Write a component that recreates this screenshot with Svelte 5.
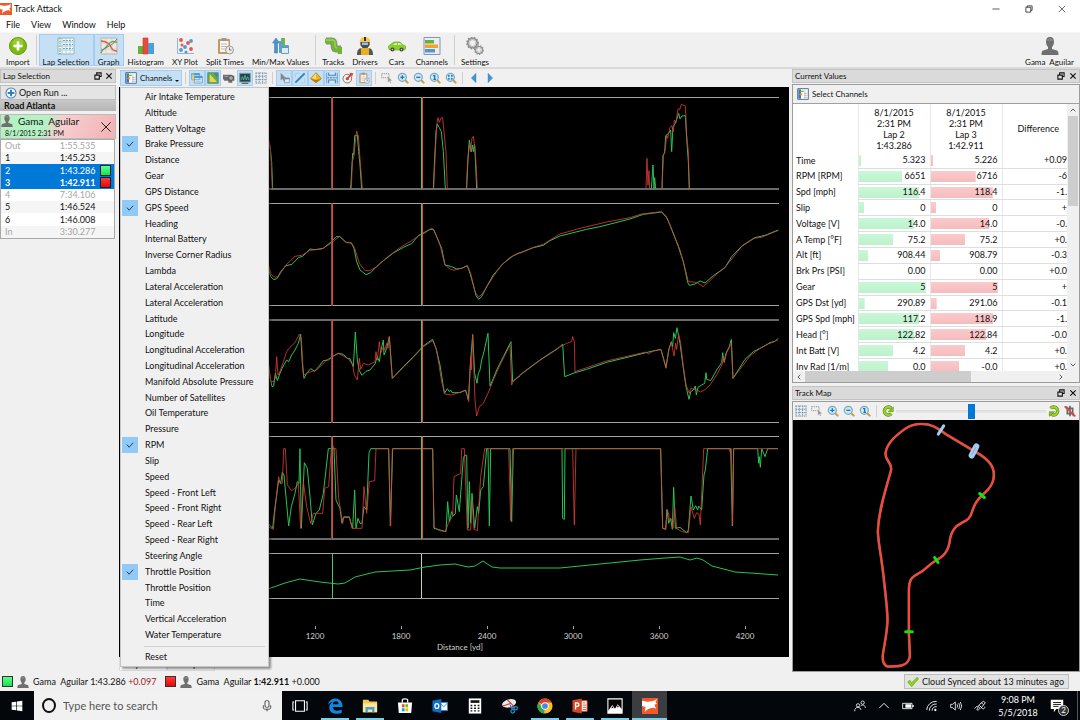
<script>
  const icons = {
    logo: '<path fill="#f0592b" d="M0 0h18v18H0z"/><path fill="#fff" d="M0 3c4 0 5 2 8 1s5 0 9-3l-2 4 2 1-3 2 2 4-3-1c-3 0-7 1-10 5L4 10 0 9z"/>',
    import: '<circle cx="9" cy="9" r="8.500" fill="#7fba12" stroke="#5f9a0a"/><circle cx="9" cy="6.500" r="5.500" fill="#a2d83e" opacity=".6"/><path d="M9 4.500v9M4.500 9h9" stroke="#fff" stroke-width="2.600"/>',
    grid: '<path fill="#f7fbfd" stroke="#8fb4c4" d="M1 1h16v16H1z"/><path stroke="#9ec7d2" d="M1 5h16M1 9h16M1 13h16M5 1v16M9 1v16M13 1v16" stroke-width=".8"/><path stroke="#55a35e" stroke-dasharray="1.500 1" d="M3 1v16"/><path stroke="#6aa7c5" d="M6 3.500h10M6 7.500h10M6 11.500h10" stroke-dasharray="2 1"/>',
    graph: '<path fill="#ece9e4" stroke="#b9b4ac" d="M1 1h16v16H1z"/><path d="M1 6h16M1 12h16M6 1v16M12 1v16" stroke="#cfcac2" stroke-width=".7"/><path fill="none" stroke="#e05a44" stroke-width="1.300" d="M1 4c5 0 9 3 10 6s3 4 6 4"/><path fill="none" stroke="#4fae54" stroke-width="1.300" d="M1 13c5 0 6-6 10-8s4 1 6 0"/><path fill="none" stroke="#777" d="M1 16C5 8 10 12 17 2"/>',
    histogram: '<path fill="#63b535" d="M1 9h5v8H1z"/><path fill="#e64c3c" stroke="#c23a2c" stroke-width=".6" d="M6 1h5v16H6z"/><path fill="#4d9fd8" d="M11 6h6v11h-6z"/>',
    xy: '<path d="M1.500 1v15.500H18M4 16v1M8 16v1M12 16v1" stroke="#9cb3c4" fill="none"/><g fill="#e5554a"><circle cx="5" cy="3" r="1.900"/><circle cx="12" cy="6" r="1.900"/><circle cx="15" cy="12" r="1.900"/><circle cx="6" cy="8" r="1.500"/></g><g fill="#4c9bd4"><circle cx="15" cy="4" r="1.900"/><circle cx="9" cy="10" r="1.900"/><circle cx="5" cy="13" r="1.900"/><circle cx="10" cy="15" r="1.500"/></g>',
    clip: '<rect x="2" y="2" width="12" height="15" rx="1" fill="#c09a66"/><path fill="#f7f6f1" d="M4 4h8.500v11H4z"/><path fill="#999" d="M5.500 1h5v3h-5z"/><path stroke="#bbb" d="M5 7h6M5 9.500h6M5 12h4"/><circle cx="13.500" cy="13" r="4" fill="#eceae5" stroke="#9b9b9b"/><path d="M13.500 10.500V13h2" stroke="#777" fill="none"/>',
    minmax: '<path fill="#4d93c9" stroke="#3477aa" stroke-width=".5" d="M4 1l3.500 5H5.500v10h-3V6H.5z"/><path fill="#6bb648" d="M9 1h4v8H9z"/><path fill="#5b9fcf" d="M7 4h3v12H7z"/><path fill="#d9ecf7" stroke="#6c9fbf" d="M9.500 8.500h7v8h-7z"/><path fill="#5a9cc8" d="M10 9h6v2h-6z"/>',
    track: '<path fill="none" stroke="#8e8e8e" stroke-width="7" d="M2 4h6c4 0 0 8 4 8h5"/><path fill="none" stroke="#6eb82c" stroke-width="4.500" d="M1 4h8c3 0-1 8 3 8h4v5"/><path fill="none" stroke="#b1e06b" stroke-width="1" d="M2 3h7c4 0 0 8 4 8"/>',
    driver: '<path fill="#555" d="M1 18c0-4 1-7 5-7h6c4 0 5 3 5 7z"/><path fill="#e7ad25" d="M5 18v-7h8v7z"/><path fill="#f2c94c" d="M5 10c-3-7 0-10 4-10s7 3 4 10z"/><path fill="#464b55" d="M4.500 5h9v3l-2 3h-5l-2-3z"/><path fill="#8ec3e6" d="M6 5.500h6V8H6z"/><path fill="#333" d="M8 0h2v4H8z"/>',
    car: '<path fill="#8fce2f" stroke="#62a315" stroke-width=".6" d="M.5 11V9l2-1.500L6 5h6l3 3 2.500 1v3l-1 1h-15z"/><path fill="#d9edb0" d="M5 8l2-2h2v2zM10 8V6h2l1.500 2z"/><circle cx="4.500" cy="12.500" r="2" fill="#444"/><circle cx="13.500" cy="12.500" r="2" fill="#444"/><circle cx="4.500" cy="12.500" r=".8" fill="#ccc"/><circle cx="13.500" cy="12.500" r=".8" fill="#ccc"/>',
    channels: '<path fill="#e9eef5" stroke="#8096b4" d="M1 .5h16v17H1z"/><path fill="#67b03e" d="M2 3h9v3.500H2z"/><path fill="#f3a32c" d="M2 7.500h13V11H2z"/><path fill="#4c9ad4" d="M2 12h10v3.500H2z"/>',
    gears: '<g fill="none" stroke="#8f8f8f"><circle cx="6.500" cy="6" r="4.200" stroke-width="2.600"/><circle cx="6.500" cy="6" r="5.600" stroke-width="1.600" stroke-dasharray="1.700 1.300"/><circle cx="13" cy="13" r="3" stroke-width="2"/><circle cx="13" cy="13" r="4.300" stroke-width="1.300" stroke-dasharray="1.400 1.200"/></g><g fill="none" stroke="#d8d8d8"><circle cx="6.500" cy="6" r="3.600"/><circle cx="13" cy="13" r="2.600"/></g>',
    user: '<path fill="#6f6f6f" d="M9 0c3 0 4 2 4 5 0 2-1 4-2 5v2l5 1.500c1 .5 1.500 2 1.500 4.500H.5C.5 15.500 1 14 2 13.500L7 12v-2C6 9 5 7 5 5c0-3 1-5 4-5z"/><path fill="#919191" opacity=".6" d="M9 1c2 0 3 1 3 3H6c0-2 1-3 3-3z"/>',
    plus: '<circle cx="9" cy="9" r="7.500" fill="#fff" stroke="#3f83bf" stroke-width="1.600"/><path d="M9 4v10M4 9h10" stroke="#2f7fc4" stroke-width="3"/>',
    chan: '<path fill="#fff" stroke="#54708f" stroke-width="1.500" d="M1 1h16v16H1z"/><path fill="#3f74b5" d="M2 2h4v14H2z"/><path fill="#67b03e" d="M4 4h6v2H4z"/><path fill="#f3952c" d="M4 8h4v3H4z"/><path stroke="#aab" d="M10 8h6M10 11h6M10 14h6M12 3v13"/>',
    layers: '<path fill="#d9ecf9" stroke="#4a8ec2" d="M1 2.500h12v9H1zM5 6.500h12v10H5z"/><path fill="#4a9bd5" d="M1 2h12v3H1zM5 6h12v3H5z"/><path fill="#f0c34a" d="M2 2h2v12H2z"/><path stroke="#8bb" d="M7 11h8M7 14h8"/>',
    shape: '<path fill="#63ad4b" stroke="#487f86" d="M1 1h16v16H1z"/><path fill="#f4d34c" d="M4 3l11 12H4z"/><path fill="#3c86bd" d="M10 2h6v8z"/>',
    camera: '<path fill="#6b6b6b" d="M0 4h12l5 2v7h-3v3H8v-3H2l-2-3z"/><circle cx="12" cy="9" r="3.500" fill="#aaa" stroke="#444"/><path stroke="#bbb" d="M2 6.500h6"/>',
    scope: '<path fill="#24424c" stroke="#7e9aa5" stroke-width="1.500" d="M1 2h16v13H1z"/><path fill="none" stroke="#65d6ad" d="M3 12l2-5 2 5 2-7 2 7 2-5 2 5"/><path d="M4 17h10" stroke="#666" stroke-width="2"/>',
    dots: '<path d="M1 1.500h16M1 6.500h16M1 11.500h16M1 16.500h16M1.500 1v16M6.500 1v16M11.500 1v16M16.500 1v16" stroke="#53799a" stroke-width="1.100" stroke-dasharray="2 1"/>',
    pointer: '<path fill="#888" d="M4 1l8 8-3 .5 2 4-2 1-2-4-3 2z"/><path fill="#e8edf2" stroke="#6c8498" d="M10 9h7v7h-7z"/><path fill="#6a89a4" d="M10 9h7v2h-7z"/>',
    line: '<path stroke="#9dc6e4" d="M2 8V2h6M16 10v6h-6" fill="none"/><path stroke="#2f84c4" stroke-width="3" d="M2 16L16 2"/>',
    gold: '<path fill="#f1b321" stroke="#9a6c09" d="M9 1l8 9-8 6-8-6z"/><path fill="#b9790b" d="M1 10l8 2v4zM17 10l-8 2v4z"/><path fill="#ffdf72" d="M9 2v9L3 9z"/>',
    stack: '<path stroke="#3c7fb8" stroke-width="1.600" fill="#d7ebf8" d="M4 1v4h10V1M4 17v-5h10v5"/><path d="M2 8.500h14" stroke="#3c7fb8" stroke-width="1.600" stroke-dasharray="3 1"/><path stroke="#3c7fb8" d="M1 1v16M17 1v16"/>',
    gauge: '<circle cx="8" cy="10" r="6.500" fill="#f5f5f5" stroke="#777" stroke-width="1.500"/><path d="M8 10L14 3" stroke="#db3a2f" stroke-width="2.500"/><circle cx="8" cy="10" r="2.500" fill="#d7463b"/><path fill="#d7463b" d="M11 1l6 1-2 5z"/>',
    select: '<path fill="none" stroke="#777" stroke-dasharray="2 1" d="M1 2.500h11v6H1z"/><path fill="#999" stroke="#fff" stroke-width=".5" d="M10 6l7 7-3 .3 1.500 3-1.600.7-1.500-3-2.400 2z"/>',
    zin: '<path stroke="#d9973a" stroke-width="3" stroke-linecap="round" d="M12 12l4 4"/><circle cx="8" cy="8" r="6" fill="#c9e8fa" stroke="#7fa7bf" stroke-width="1.800"/><path stroke="#1f78b8" stroke-width="2" d="M8 5v6M5 8h6"/>',
    zout: '<path stroke="#d9973a" stroke-width="3" stroke-linecap="round" d="M12 12l4 4"/><circle cx="8" cy="8" r="6" fill="#c9e8fa" stroke="#7fa7bf" stroke-width="1.800"/><path stroke="#1f78b8" stroke-width="2" d="M5 8h6"/>',
    zone: '<path stroke="#d9973a" stroke-width="3" stroke-linecap="round" d="M12 12l4 4"/><circle cx="8" cy="8" r="6" fill="#c9e8fa" stroke="#7fa7bf" stroke-width="1.800"/><path stroke="#1f78b8" stroke-width="2" fill="none" d="M6 5.500h2.500V11M6.500 11h4"/>',
    zfit: '<path stroke="#d9973a" stroke-width="3" stroke-linecap="round" d="M12 12l4 4"/><circle cx="8" cy="8" r="6" fill="#c9e8fa" stroke="#7fa7bf" stroke-width="1.800"/><path stroke="#1f78b8" stroke-width="2" d="M5 5.500h2M9 5.500h2M5 10.500h2M9 10.500h2M5.500 5v2M10.500 5v2M5.500 9v2M10.500 9v2"/>',
    left: '<path fill="#3f96d8" stroke="#2473b0" stroke-width=".5" d="M12 2v14L5 9z"/>',
    right: '<path fill="#3f96d8" stroke="#2473b0" stroke-width=".5" d="M6 2v14l7-7z"/>',
    ccw: '<path fill="none" stroke="#4f7d0a" stroke-width="5" d="M14 5a6 6 0 1 0 0 8"/><path fill="none" stroke="#9bd02a" stroke-width="3.400" d="M14 5a6 6 0 1 0 0 8"/><path fill="#8cc31f" stroke="#4f7d0a" stroke-width=".7" d="M17 3v7H9z"/>',
    cw: '<path fill="none" stroke="#4f7d0a" stroke-width="5" d="M4 5a6 6 0 1 1 0 8"/><path fill="none" stroke="#9bd02a" stroke-width="3.400" d="M4 5a6 6 0 1 1 0 8"/><path fill="#8cc31f" stroke="#4f7d0a" stroke-width=".7" d="M2 17v-7h8z"/>',
    mute: '<path fill="none" stroke="#666" stroke-width="2.500" d="M5 5h8v8H5zM9 1v16M4 2v4M14 12v5"/><path stroke="#e0483b" stroke-width="2.500" d="M1 2l16 15"/>',
    tick: '<path fill="#8ed11f" stroke="#5d9a0d" stroke-width=".8" d="M1 9l3-3 3 4 8-8 2.500 2L7 16z"/>',
    win: '<path fill="#fff" d="M1 3.500l7-1V8.500H1zM9 2.300L17 1v7.500H9zM1 9.500h7v6l-7-1zM9 9.500h8V17l-8-1.300z"/>',
    mic: '<rect x="6" y="1" width="6" height="10" rx="2" fill="none" stroke="#333" stroke-width="1.300"/><path fill="none" stroke="#333" stroke-width="1.300" d="M3.500 8v3.500c0 2 2 2.500 5.500 2.500s5.500-.5 5.500-2.500V8M9 14v3"/>',
    taskview: '<path fill="none" stroke="#fff" stroke-width="1.200" d="M4 3h10v12H4zM2.500 4.500H1v9h1.500M15.500 4.500H17v9h-1.500"/>',
    edge: '<path fill="#1285e0" d="M1 8C2 3 5 .5 9.500.5 15 .5 17.500 4.500 17.500 10H6.500c.2 3 2.500 4.300 5 4.300 2 0 3.500-.5 5-1.300v3.500c-1.500.8-3.500 1.200-6 1.200-5 0-8-3-8-7 0-3 1.500-5 4-6.200C4 4.500 2 6 1 8zm5.500-1H13c0-2-1-3.300-3-3.300S6.800 5 6.500 7z"/>',
    folder: '<path fill="#f4c64c" d="M1 2h6l1.500 2H17v12H1z"/><path fill="#ffe596" d="M1 6h16v10H1z"/><path fill="#3fa0dc" d="M4 10h10v6h-2.500v-3h-5v3H4z"/>',
    store: '<path fill="none" stroke="#fff" stroke-width="1.400" d="M6 5V2c0-1.500 6-1.500 6 0v3"/><path fill="#fff" d="M1 5h16l-1 12H2z"/><path fill="#f25022" d="M5.500 7h3v3.500h-3z"/><path fill="#7fba00" d="M9.500 7h3v3.500h-3z"/><path fill="#00a4ef" d="M5.500 11.500h3V15h-3z"/><path fill="#ffb900" d="M9.500 11.500h3V15h-3z"/>',
    outlook: '<path fill="#fff" stroke="#2b88d8" d="M8 5h9.500v9H8z"/><path fill="none" stroke="#2b88d8" d="M9 6l4 4 4-4"/><path fill="#0f6fc5" d="M.5 3l10-2v16l-10-2z"/><ellipse cx="5.500" cy="9" rx="2.200" ry="2.800" fill="none" stroke="#fff" stroke-width="1.400"/>',
    calc: '<path fill="#fff" d="M2 .5h14v17H2z"/><path fill="#111" d="M4 2.500h10v3H4z"/><path stroke="#111" stroke-width="1.600" stroke-dasharray="2 2" d="M4 8.500h11M4 11.500h11M4 14.500h11"/>',
    snip: '<ellipse cx="8" cy="6" rx="8" ry="4.500" fill="#e9e9ea" transform="rotate(-15 8 6)"/><path stroke="#d94242" stroke-width="1.400" d="M1 9l9-3M6 2l8 8"/><g fill="none" stroke="#2c86c9" stroke-width="1.400"><circle cx="12" cy="15" r="2"/><circle cx="15.500" cy="11.500" r="1.900"/><path d="M9 8l3 5M9 10l5 1"/></g>',
    chrome: '<circle cx="9" cy="9" r="8.500" fill="#fbc116"/><path fill="#e33b2e" d="M9 9L1.600 4.800A8.500 8.500 0 0 1 16.500 5H9z"/><path fill="#2da94f" d="M9 9l-1 8.500A8.500 8.500 0 0 1 1.600 4.800L6 11z"/><circle cx="9" cy="9" r="4.200" fill="#fff"/><circle cx="9" cy="9" r="3.200" fill="#4285f4"/>',
    ppt: '<path fill="#fff" stroke="#d24726" d="M9 3h8v12H9z"/><path stroke="#d24726" d="M12 8h4M12 10.500h4M12 13h4M12 5.500h3"/><path fill="#d24726" d="M.5 2.500L11 .5v17L.5 15.500z"/><path fill="none" stroke="#fff" stroke-width="1.500" d="M4 13V5.500h1.500c3 0 3 4 0 4H4"/>',
    photos: '<path fill="#050505" stroke="#fff" stroke-width="1.200" d="M1 1h16v16H1z"/><path fill="#fff" d="M1 15l5-7 3 4 3-5 5 6v4H1z"/><path fill="#050505" d="M6 9l1.500 2.500-2-.5-1 1zM12 8l1.500 2.500-1.500-.5-1 1z"/>',
    people: '<g fill="none" stroke="#fff" stroke-width="1.200"><circle cx="6" cy="8" r="2.500"/><circle cx="13" cy="4" r="2.500"/><path d="M1 17c0-4 2-6 5-6s4 2 4.500 4M10 9c3-3 7-1 7 3"/></g>',
    chevron: '<path fill="none" stroke="#fff" stroke-width="1.400" d="M2 12l7-7 7 7"/>',
    arrow: '<path fill="none" stroke="#444" stroke-width="2.600" d="M2 13l7-7 7 7"/>',
    battery: '<path fill="none" stroke="#fff" stroke-width="1.300" d="M1 5h14v8H1z"/><path fill="#fff" d="M5 6.500h8.500v5H5zM15.500 7.500h2v3h-2z"/>',
    wifi: '<g fill="none" stroke="#fff" stroke-width="1.300"><path d="M1 15A14 14 0 0 1 16 2M5 16A10 10 0 0 1 16 6M9 16a6 6 0 0 1 7-6"/></g><circle cx="14" cy="15" r="1.700" fill="#fff"/>',
    sound: '<path fill="none" stroke="#fff" stroke-width="1.200" d="M1 6.500h3L8 3v12l-4-3.500H1zM10.500 6.500q2 2.500 0 5M13 4.500q3.500 4.500 0 9M15.500 3q4 6 0 12"/>',
    pen: '<path fill="none" stroke="#fff" stroke-width="1.300" d="M1 13c4-6 6-3 4 0s2 3 3 0c1-2-3-3 0-6l6-5 3 2-7 9M8 8l4 4c2 3 5 0 4-2M11 4l3 3"/>',
    note: '<path fill="#fff" d="M1 1h16v12h-9l-3 4v-4H1z"/><path stroke="#111" stroke-width="1.200" d="M4 4.500h10M4 7h10M4 9.500h7"/>',
    float: '<path fill="none" stroke="#111" stroke-width="2.400" d="M6 6V2h10v8h-4M2 7h10v9H2z"/>',
    close: '<path stroke="#111" stroke-width="2.600" d="M3 3l12 12M15 3L3 15"/>',
    thinx: '<path stroke="#222" stroke-width="1.500" d="M2 2l14 14M16 2L2 16"/>',
    min: '<path stroke="#333" stroke-width="1.800" d="M1 9h16"/>',
    restore: '<path fill="none" stroke="#222" stroke-width="1.800" d="M5 5V2h11v10h-3M2 5h11v11H2z"/>',
    check: '<path fill="none" stroke="#1d2f45" stroke-width="2" d="M2 8l5 6 9-10"/>'
  };

  const menus = ['File', 'View', 'Window', 'Help'];
  const tools = [
    { t: 'Import', i: 'import' }, null,
    { t: 'Lap Selection', i: 'grid', on: true }, { t: 'Graph', i: 'graph', on: true },
    { t: 'Histogram', i: 'histogram' }, { t: 'XY Plot', i: 'xy' }, { t: 'Split Times', i: 'clip' },
    { t: 'Min/Max Values', i: 'minmax' }, null,
    { t: 'Tracks', i: 'track' }, { t: 'Drivers', i: 'driver' }, { t: 'Cars', i: 'car' },
    { t: 'Channels', i: 'channels' }, null, { t: 'Settings', i: 'gears' }
  ];
  const graphTools = [
    ['layers', 1], ['shape', 1], ['camera', 0], ['scope', 1], ['dots', 0], null,
    ['pointer', 1], ['line', 1], ['gold', 1], ['stack', 1], ['gauge', 0], ['clip', 1], null,
    ['select', 0], ['zin', 0], ['zout', 0], ['zone', 0], ['zfit', 0], null,
    ['left', 0], ['right', 0]
  ];
  const laps = [
    ['Out', '1:55.535', 'dim'], ['1', '1:45.253', ''], ['2', '1:43.286', 'sel green'],
    ['3', '1:42.911', 'sel red best'], ['4', '7:34.106', 'dim'], ['5', '1:46.524', ''],
    ['6', '1:46.008', ''], ['In', '3:30.277', 'dim']
  ];
  const channels = ['Air Intake Temperature', 'Altitude', 'Battery Voltage', 'Brake Pressure', 'Distance',
    'Gear', 'GPS Distance', 'GPS Speed', 'Heading', 'Internal Battery', 'Inverse Corner Radius', 'Lambda',
    'Lateral Acceleration', 'Lateral Acceleration', 'Latitude', 'Longitude', 'Longitudinal Acceleration',
    'Longitudinal Acceleration', 'Manifold Absolute Pressure', 'Number of Satellites', 'Oil Temperature',
    'Pressure', 'RPM', 'Slip', 'Speed', 'Speed - Front Left', 'Speed - Front Right', 'Speed - Rear Left',
    'Speed - Rear Right', 'Steering Angle', 'Throttle Position', 'Throttle Position', 'Time',
    'Vertical Acceleration', 'Water Temperature'];
  const checked = [3, 7, 22, 30];
  const values = [
    ['Time', '5.323', 3, '5.226', 3, '+0.09'], ['RPM [RPM]', '6651', 61, '6716', 63, '-6'],
    ['Spd [mph]', '116.4', 85, '118.4', 87, '-1.'], ['Slip', '0', 7, '0', 7, '+'],
    ['Voltage [V]', '14.0', 78, '14.0', 82, '-0.'], ['A Temp [°F]', '75.2', 48, '75.2', 48, '+0.'],
    ['Alt [ft]', '908.44', 13, '908.79', 13, '-0.3'], ['Brk Prs [PSI]', '0.00', 0, '0.00', 0, '+0.0'],
    ['Gear', '5', 94, '5', 94, '+'], ['GPS Dst [yd]', '290.89', 8, '291.06', 8, '-0.1'],
    ['GPS Spd [mph]', '117.2', 85, '118.9', 88, '-1.'], ['Head [°]', '122.82', 78, '122.84', 78, '-0.0'],
    ['Int Batt [V]', '4.2', 48, '4.2', 48, '+0.'], ['Inv Rad [1/m]', '0.0', 41, '-0.0', 40, '+0.']
  ];

  // Each block: plot origin, then the polylines of lap 2 (green) and lap 3 (red) at a third of a pixel per unit.
  const traces = [
    { x: 260, y: 85,
      g: ['24,175 30,185 35,230 38,311', '272,311 276,240 278,205 281,210 284,152 292,150 296,200 300,240 305,311',
        '520,311 524,220 528,140 532,118 538,128 544,140 550,200 556,311', '620,311 624,220 628,165 634,200 638,180 640,200 644,178 650,311',
        '24,545 32,575 42,584 52,580 62,560 78,542 96,538 115,518 128,514 150,492 165,494 190,490 214,470 228,455 240,455 258,472 274,474 282,490 290,530 300,555 318,569 332,563 360,535 400,504 430,487 455,476 475,452 495,443 510,433 520,433 530,455 545,490 555,540 575,545 590,552 605,550 622,542 630,565 640,600 648,632 656,643 665,635 680,605 700,570 730,535 760,512 780,503'],
      r: ['24,155 31,185 37,311', '274,311 277,230 282,212 287,160 290,138 295,152 300,220 307,311',
        '521,311 526,200 530,120 534,98 538,112 544,98 548,98 552,140 558,200 562,311', '619,311 623,230 628,180 632,200 636,160 640,154 646,200 652,311',
        '24,535 34,570 46,577 56,573 78,540 105,514 125,511 150,496 185,492 215,474 238,454 258,472 274,473 284,490 298,535 315,557 330,557 350,545 380,518 420,488 455,467 490,443 515,430 522,435 540,480 555,540 570,552 582,556 610,548 622,542 632,565 645,620 655,636 666,628 690,590 720,545 750,517 780,503'] },
    { x: 520, y: 85,
      g: ['394,311 399,240 402,311 404,278 407,311', '426,311 429,210 434,205 437,152 446,145 452,135 455,200 459,125 466,115 476,85 480,102 486,93 496,92 500,160 505,230 508,311',
        '0,504 40,488 70,481 90,467 120,453 200,433 240,425 330,402 370,388 425,381 440,398 450,420 475,485 490,530 503,592 508,601 525,597 540,588 555,594 580,572 615,548 635,515 665,484 705,458 735,451 775,435'],
      r: ['378,311 381,220 384,300 387,257 389,311', '426,311 430,215 436,190 440,150 443,160 450,128 455,122 460,140 463,105 468,112 474,72 480,72 484,58 496,63 500,150 505,200 508,311',
        '0,504 40,487 70,478 92,464 120,447 180,430 260,411 330,398 365,387 425,380 440,396 460,445 480,495 495,550 505,590 530,592 549,605 565,592 590,567 615,547 645,510 668,481 700,460 725,457 775,436'] },
    { x: 260, y: 310,
      g: ['24,155 30,200 36,230 41,228 46,190 52,212 58,195 66,175 80,150 86,155 95,135 105,120 115,100 122,73 127,160 132,205 140,190 152,176 164,184 178,168 190,152 205,150 220,138 235,130 250,133 262,145 270,146 280,170 286,66 292,150 298,182 306,196 318,184 330,180 345,162 352,140 358,155 362,125 370,90 372,135 380,115 388,80 397,205 430,170 460,140 490,108 505,97 518,88 528,115 540,165 553,250 562,236 568,245 572,240 576,248 600,248 617,240 625,270 632,150 638,75 644,190 651,220 655,190 660,180 665,150 672,125 684,70 690,228 700,205 710,180 730,140 753,95 758,215 770,205 780,198',
        '24,640 38,655 44,600 56,510 62,520 67,487 72,495 86,648 94,590 105,550 112,515 117,520 120,416 124,655 133,458 142,475 150,560 157,645 168,610 178,600 190,550 205,416 222,416 228,570 240,595 246,640 250,622 268,622 278,655 284,540 288,655 294,625 300,640 306,640 312,590 320,600 327,430 332,416 386,416 391,648 398,416 518,416 522,655 558,665 563,575 568,635 575,605 580,618 586,610 589,555 598,605 610,445 614,436 620,436 624,655 628,515 632,640 636,550 644,655 652,590 656,610 662,540 670,530 680,416 684,416 688,648 692,416 750,416 755,635 760,416 780,416'],
      r: ['24,150 32,213 40,216 46,205 50,140 54,195 60,185 70,155 80,125 90,112 105,98 118,73 124,85 130,195 145,188 170,180 200,150 235,130 265,146 278,165 283,195 292,210 298,145 302,178 310,160 325,165 345,155 348,125 352,150 358,95 362,130 370,110 374,120 380,100 384,115 388,80 397,205 430,172 460,142 490,110 518,92 530,120 545,215 555,252 575,255 590,250 615,242 622,255 626,275 632,140 634,180 638,72 645,270 650,318 658,290 670,280 684,250 700,210 720,165 750,105 755,225 760,212 780,195',
        '24,650 40,658 46,590 56,500 60,520 67,520 71,416 76,416 82,525 95,542 105,535 115,520 122,655 130,515 140,590 152,640 160,610 188,610 194,535 206,530 214,416 218,405 222,416 228,416 236,565 248,640 252,620 268,620 276,655 306,655 312,530 320,610 328,515 344,512 348,416 386,416 392,648 397,416 518,416 522,652 540,662 556,665 565,640 578,618 582,500 602,490 605,416 613,416 622,660 632,660 636,570 642,658 652,662 662,500 674,416 746,416 752,632 758,416 780,416'] },
    { x: 520, y: 310,
      g: ['0,195 30,172 60,150 90,130 118,112 128,102 134,200 165,188 200,178 260,157 330,140 390,125 423,118 438,172 446,120 454,95 458,110 461,68 466,85 471,53 480,100 488,160 498,230 507,268 512,245 520,240 526,228 529,255 534,232 545,225 554,220 558,188 560,208 572,212 590,180 605,158 608,128 612,155 618,130 628,110 634,88 639,205 655,180 675,148 700,125 730,110 750,98 765,94 774,85',
        '0,416 126,416 128,625 133,628 135,416 422,416 428,655 437,658 441,598 446,640 452,625 457,658 461,532 466,655 480,652 500,668 505,660 513,558 520,600 527,587 533,600 536,588 545,600 552,495 556,480 563,416 632,416 637,648 641,416 713,416 716,460 718,440 721,472 725,416 735,440 743,416 774,416'],
      r: ['0,196 60,151 100,125 118,112 140,100 155,95 158,80 163,95 165,185 200,173 260,153 330,137 378,126 385,132 400,123 423,119 438,175 448,112 454,98 462,138 467,100 470,118 476,73 482,100 490,170 498,225 508,250 512,235 530,240 542,246 556,238 570,225 590,195 608,160 610,140 613,158 620,128 634,100 639,205 660,178 690,138 720,115 745,102 774,90',
        '0,416 158,416 163,645 168,416 422,416 428,655 437,658 442,600 446,612 448,630 455,628 459,655 464,590 470,655 485,665 505,668 513,590 523,625 530,608 537,612 541,645 551,416 626,416 630,425 634,416 638,645 641,416 774,416'] }
  ];
  const thinRules = [97.5, 203.5, 305.5, 422.5, 436.5, 553.5, 598.5];
  const thickRules = [189, 320, 539];
  const bands = [[97, 189], [203, 306], [320, 423], [436, 539]];
  const ticks = [['1200', 315], ['1800', 401], ['2400', 487], ['3000', 573], ['3600', 659], ['4200', 745]];
  const apps = [
    ['taskview', ''], ['edge', 'run'], ['folder', 'run'], ['store', ''], ['outlook', ''], ['calc', ''],
    ['snip', ''], ['chrome', 'run'], ['ppt', 'run'], ['photos', 'run'], ['logo', 'run active']
  ];
  const tray = ['people', 'chevron', 'battery', 'wifi', 'sound', 'pen'];
  const trackPath = 'M425 43C460 43 475 58 500 75L582 124C620 145 642 165 642 195C642 225 625 240 606 258C590 272 583 285 577 305C570 330 560 332 545 340C525 350 515 365 511 385C508 410 503 435 469 452C445 465 440 480 415 492C395 502 387 510 387 545V670L390 735C390 760 370 770 345 770L328 771C312 771 307 755 309 735C314 700 322 670 323 630C322 590 316 550 311 500C303 430 295 400 294 365C296 300 318 240 334 180C335 155 315 155 317 130C322 100 345 80 375 58C390 47 405 43 425 43Z';
  let position = $state(50);
</script>

{#snippet icon(name, size)}
  <svg class="icon {size}" viewBox="0 0 18 18" fill="none" aria-hidden="true">{@html icons[name]}</svg>
{/snippet}

{#snippet dockTitle(text)}
  <header class="dock-title">
    <h2>{text}</h2>
    <button aria-label="Float {text}">{@render icon('float', 'xs')}</button>
    <button aria-label="Close {text}">{@render icon('close', 'xs')}</button>
  </header>
{/snippet}

<div class="app">
  <header class="titlebar">
    {@render icon('logo', 's')}
    <h1>Track Attack</h1>
    <button aria-label="Minimize">{@render icon('min', 'xs')}</button>
    <button aria-label="Restore">{@render icon('restore', 'xs')}</button>
    <button aria-label="Close">{@render icon('thinx', 'xs')}</button>
  </header>

  <nav class="menubar">
    {#each menus as m}<button>{m}</button>{/each}
  </nav>

  <div class="toolbar">
    {#each tools as tool}
      {#if tool}
        <button class="tool" class:on={tool.on}>{@render icon(tool.i, 'l')}<span>{tool.t}</span></button>
      {:else}
        <i class="sep"></i>
      {/if}
    {/each}
    <button class="tool account">{@render icon('user', 'l')}<span>Gama  Aguilar</span></button>
  </div>

  <main>
    <section class="laps">
      {@render dockTitle('Lap Selection')}
      <button class="open-run">{@render icon('plus', 's')}Open Run ...</button>
      <h3>Road Atlanta</h3>
      <div class="run">
        {@render icon('user', 's')}
        <div class="run-text"><b>Gama  Aguilar</b><span>8/1/2015 2:31 PM</span></div>
        <button aria-label="Close run">{@render icon('thinx', 's')}</button>
      </div>
      <table class="lap-table">
        <tbody>
          {#each laps as [name, time, cls]}
            <tr class={cls}><td>{name}</td><td class="num">{time}</td><td class="mark"><i></i></td></tr>
          {/each}
        </tbody>
      </table>
    </section>

    <section class="graph">
      <div class="graph-bar">
        <button class="drop on">{@render icon('chan', 's')}Channels<i></i></button>
        <i class="sep"></i>
        {#each graphTools as tool}
          {#if tool}
            <button class="mini" class:on={tool[1]} aria-label={tool[0]}>{@render icon(tool[0], 's')}</button>
          {:else}
            <i class="sep"></i>
          {/if}
        {/each}
      </div>
      <div class="plot">
        <svg viewBox="119 87 671 570" preserveAspectRatio="xMinYMin slice" aria-label="Channel graphs">
          {#each thinRules as y}<path class="thin" d="M120 {y}H779" />{/each}
          {#each thickRules as y}<path class="thick" d="M120 {y}H779" />{/each}
          {#each traces as t}
            <g transform="translate({t.x} {t.y}) scale(.33333)">
              {#each t.g as p}<polyline class="green" points={p} />{/each}
              {#each t.r as p}<polyline class="red" points={p} />{/each}
            </g>
          {/each}
          {#each bands as [a, b]}
            <path class="cur-g dim" d="M331.500 {a}V{b}" /><path class="cur-r" d="M332.500 {a}V{b}" />
            <path class="cur-g" d="M421.500 {a}V{b}" /><path class="cur-r" d="M422.500 {a}V{b}" />
          {/each}
          <path class="cur-g" d="M332.500 554V598" /><path class="cur-w" d="M421.500 554V598" />
          <polyline class="green" points="268,589 285,583 300,579 320,582 338,584 345,583 355,577 375,572 410,570 425,567 440,565 455,564 468,567 475,566 483,561 492,567 500,568 560,568 600,564 640,560 665,558 680,557 690,560 697,558 703,560 712,566 735,572 750,573 778,575" />
          {#each ticks as [label, x]}
            <path class="thin" d="M{x + 0.5} 626v3" />
            <text {x} y="639">{label}</text>
          {/each}
          <text x="460" y="650">Distance [yd]</text>
        </svg>
        <div class="menu" role="menu">
          <div class="items">
            {#each channels as c, n}
              <button role="menuitemcheckbox" aria-checked={checked.includes(n)}>
                <i class:ticked={checked.includes(n)}>{#if checked.includes(n)}{@render icon('check', 'xs')}{/if}</i>{c}
              </button>
            {/each}
          </div>
          <hr />
          <button class="reset" role="menuitem"><i></i>Reset</button>
        </div>
      </div>
      <div class="tabs"><button class="on">Layout 0</button><button>Graph</button></div>
    </section>

    <aside>
      <section class="values">
        {@render dockTitle('Current Values')}
        <div class="frame">
          <button class="select">{@render icon('chan', 's')}Select Channels</button>
          <div class="view">
            <div class="scroller">
              <table class="value-table">
                <thead>
                  <tr>
                    <th></th>
                    <th>8/1/2015<br />2:31 PM<br />Lap 2<br />1:43.286</th>
                    <th>8/1/2015<br />2:31 PM<br />Lap 3<br />1:42.911</th>
                    <th>Difference</th>
                  </tr>
                </thead>
                <tbody>
                  {#each values as [name, a, aw, b, bw, d]}
                    <tr>
                      <td>{name}</td>
                      <td class="bar g" style="--w: {aw}%">{a}</td>
                      <td class="bar r" style="--w: {bw}%">{b}</td>
                      <td class="diff">{d}</td>
                    </tr>
                  {/each}
                </tbody>
              </table>
            </div>
            <div class="vscroll">{@render icon('arrow', 'arrow')}<i></i>{@render icon('arrow', 'arrow down')}</div>
          </div>
          <div class="hscroll">{@render icon('arrow', 'arrow back')}<i></i>{@render icon('arrow', 'arrow fore')}</div>
        </div>
      </section>

      <section class="map">
        {@render dockTitle('Track Map')}
        <div class="frame">
          <div class="map-bar">
            {#each ['dots', 'select', 'zin', 'zout', 'zone'] as name}
              <button class="mini" aria-label={name}>{@render icon(name, 's')}</button>
            {/each}
            <i class="sep"></i>
            <button class="mini" aria-label="Rotate left">{@render icon('ccw', 's')}</button>
            <input type="range" min="0" max="100" bind:value={position} aria-label="Rotation" />
            <button class="mini" aria-label="Rotate right">{@render icon('cw', 's')}</button>
            <button class="mini" aria-label="Reset rotation">{@render icon('mute', 's')}</button>
          </div>
          <svg class="track" viewBox="793 421 286 250" aria-label="Track map">
            <g transform="translate(780 410) scale(.33333)" fill="none">
              <path d={trackPath} stroke="#2c7a35" stroke-width="7" transform="translate(-1 1)" />
              <path d={trackPath} stroke="#f9453f" stroke-width="7" />
              <g stroke="#9fcdf5" stroke-linecap="round">
                <path d="M491 49L475 74" stroke-width="9" />
                <path d="M589 111L575 138" stroke-width="18" />
              </g>
              <path d="M588 113L575 136" stroke="#d98a9a" stroke-width="3" />
              <path d="M599 252l14 12M464 444l10 15M377 667h20" stroke="#0be60b" stroke-width="9" stroke-linecap="round" />
            </g>
          </svg>
        </div>
      </section>
    </aside>
  </main>

  <footer class="status">
    <i class="swatch g"></i>{@render icon('user', 's')}<span>Gama  Aguilar 1:43.286 <em>+0.097</em></span>
    <i class="swatch r"></i>{@render icon('user', 's')}<span>Gama  Aguilar <b>1:42.911</b> +0.000</span>
    <button class="sync">{@render icon('tick', 's')}Cloud Synced about 13 minutes ago</button>
  </footer>

  <div class="taskbar">
    <button class="start" aria-label="Start">{@render icon('win', 's')}</button>
    <label class="search"><i></i><input type="text" placeholder="Type here to search" aria-label="Search" />{@render icon('mic', 's')}</label>
    {#each apps as [name, cls]}
      <button class="task {cls}" aria-label={name}>{@render icon(name, 'l')}</button>
    {/each}
    <div class="tray">
      {#each tray as name}<button aria-label={name}>{@render icon(name, 's')}</button>{/each}
    </div>
    <time>9:08 PM<br />5/5/2018</time>
    <button class="notes" aria-label="Notifications">{@render icon('note', 'm')}<b>2</b></button>
  </div>
</div>

<style>
  :global(body) { background: #f0f0f0; }
  * { box-sizing: border-box; }
  .app { display: flex; flex-direction: column; height: 100vh; font: 9px/12px Lato, "Open Sans", sans-serif; color: #111; overflow: hidden; }
  button { font: inherit; color: inherit; background: none; border: 0; padding: 0; margin: 0; display: flex; align-items: center; white-space: pre; }
  h1, h2, h3 { margin: 0; font: inherit; }
  .icon { display: block; flex: none; width: 14px; height: 14px; }
  .icon.xs { width: 8px; height: 8px; }
  .icon.s { width: 12px; height: 12px; }
  .icon.l { width: 18px; height: 18px; }

  .titlebar { display: flex; align-items: center; height: 17px; padding-right: 14px; background: #fff; }
  .titlebar h1 { flex: 1; padding-left: 2px; }
  .titlebar button { margin-left: 25px; }
  .menubar { display: flex; gap: 11px; height: 15px; padding-left: 6px; background: #fff; }
  .toolbar { display: flex; align-items: stretch; height: 37px; padding: 1px 2px; background: #f0f0f0; border-top: 1px solid #f7f7f7; border-bottom: 2px solid #d9d9d9; }
  .tool { flex-direction: column; gap: 1px; min-width: 30px; padding: 2px 3px; border: 1px solid transparent; font-size: 8px; }
  .tool.on, .mini.on, .drop.on { background: #c5dff5; border: 1px solid #a5cdf0; }
  .account { margin-left: auto; }
  .sep { width: 1px; margin: 1px 2px; background: #cfcfcf; }

  main { flex: 1; min-height: 0; display: grid; grid-template-columns: 116px minmax(0, 1fr) 288px; gap: 3px; }
  .dock-title { display: flex; align-items: center; height: 14px; gap: 3px; padding: 0 2px; background: #dadada; border: 1px solid #c3c3c3; font-size: 8px; }
  .dock-title h2 { flex: 1; }
  .laps { display: flex; flex-direction: column; }
  .open-run { height: 15px; margin-top: 2px; padding: 0 4px; gap: 2px; background: #e4e4e4; border: 1px solid #bcbcbc; }
  .laps h3 { height: 11px; padding-left: 4px; line-height: 11px; font-weight: 700; background: linear-gradient(#c9c9c9, #b5b5b5); }
  .run { display: flex; height: 25px; margin-top: 3px; border: 1px solid #bbb; background: linear-gradient(110deg, #b4f1c3 0 38%, #f7cfd0 52%, #f2b2b4); }
  .run-text { flex: 1; display: flex; flex-direction: column; margin-left: -8px; white-space: pre; }
  .run-text b { padding-left: 13px; font-weight: 400; font-size: 10px; line-height: 13px; }
  .run-text span { font-size: 7px; line-height: 10px; }
  .run button { padding-right: 3px; }
  table { border-collapse: collapse; }
  .lap-table { width: 115px; height: 100px; border: 1px solid #a9a9a9; background: #fff; }
  td, th { padding: 0; }
  .lap-table td:first-child { padding-left: 4px; }
  .lap-table tr:nth-child(even) { background: #f5f5f5; }
  .lap-table .num { text-align: right; }
  .lap-table .mark { width: 19px; padding-left: 4px; }
  .dim { color: #a6a6a6; }
  .lap-table tr.sel { background: #0078d7; color: #fff; }
  .lap-table .best { font-weight: 700; }
  .sel i { display: block; width: 11px; height: 11px; border: 1px solid #123; }
  .green i, .swatch.g { background: linear-gradient(#5dff88, #19e24d); }
  .red i, .swatch.r { background: linear-gradient(#ff3b33, #e80606); }

  .graph { display: flex; flex-direction: column; }
  .graph-bar { display: flex; align-items: center; height: 18px; padding-left: 1px; }
  .graph-bar .sep, .map-bar .sep { height: 12px; margin: 0 3px; }
  .drop { height: 16px; padding: 0 2px 0 4px; gap: 3px; font-size: 8px; }
  .drop i { align-self: flex-end; margin-bottom: 3px; border: 2px solid transparent; border-top-color: #111; border-bottom: 0; }
  .mini { justify-content: center; width: 16px; height: 16px; border: 1px solid transparent; }
  .plot { position: relative; flex: 1; min-height: 0; background: #000; }
  .plot > svg { display: block; width: 100%; height: 100%; }
  .plot path { fill: none; }
  .thin { stroke: #a5a5a5; }
  .thick { stroke: #6a6a6a; stroke-width: 2; }
  polyline { fill: none; vector-effect: non-scaling-stroke; }
  polyline.green { stroke: #26c455; }
  polyline.red { stroke: #e23c37; stroke-opacity: 0.8; }
  .cur-g { stroke: #4fc761; }
  .cur-g.dim { stroke: #7d5a3c; }
  .cur-r { stroke: #e0483e; }
  .cur-w { stroke: #b7d9b9; }
  text { fill: #d0d0d0; text-anchor: middle; font-size: 8px; }
  .menu { position: absolute; top: 0; left: 1px; z-index: 1; width: 149px; height: 580px; padding: 1px 1px 0; background: #f0f0f0; border: 1px solid #c6c6c6; box-shadow: 2px 2px 2px #0006; }
  .items { display: grid; grid-template-rows: repeat(35, minmax(0, 1fr)); height: 554px; }
  .menu button { width: 100%; gap: 7px; }
  .menu button i { display: grid; place-items: center; width: 16px; height: 16px; }
  .menu .ticked { background: #91c9f7; }
  .menu hr { margin: 3px 2px 2px 22px; border: 0; border-top: 1px solid #d2d2d2; }
  .menu .reset { height: 16px; }
  .tabs { display: flex; height: 15px; }
  .tabs button { width: 48px; height: 14px; justify-content: center; border: 1px solid #ddd; }
  .tabs .on { background: #fff; }

  aside { display: grid; grid-template-columns: minmax(0, 1fr); grid-template-rows: minmax(0, 317fr) minmax(0, 286fr); min-height: 0; }
  aside .dock-title { gap: 4px; }
  aside section { display: flex; flex-direction: column; min-height: 0; }
  .frame { flex: 1; min-height: 0; display: flex; flex-direction: column; margin-top: 1px; border: 1px solid #9c9c9c; }
  .values { padding-bottom: 3px; }
  .select { height: 19px; padding-left: 4px; gap: 3px; border-bottom: 1px solid #a0a0a0; font-size: 8px; }
  .view { flex: 1; min-height: 0; display: flex; background: #fff; }
  .scroller { flex: 1; min-width: 0; overflow: hidden; }
  .value-table { table-layout: fixed; width: 281px; height: 271px; }
  .value-table th { height: 49px; padding: 0; font-weight: 400; line-height: 11px; border-left: 1px solid #e8e8e8; text-align: center; }
  .value-table th:first-child { width: 65px; border: 0; }
  .value-table td { line-height: 12px; padding-left: 3px; white-space: nowrap; }
  .value-table td + td { padding: 0 4px 0 0; text-align: right; border-left: 1px solid #e8e8e8; border-bottom: 1px solid #dedede; }
  .value-table td.diff { padding-right: 7px; }
  .bar { background: no-repeat 0 2px / var(--w) 11px; }
  .bar.g { background-image: linear-gradient(#c9f8d6, #bdf1cc); }
  .bar.r { background-image: linear-gradient(#fbcaca, #f4bcbd); }
  .vscroll { width: 12px; display: flex; flex-direction: column; align-items: center; background: #f0f0f0; }
  .vscroll i { width: 10px; height: 90px; background: #cdcdcd; }
  .arrow { width: 12px; height: 12px; padding: 3px; }
  .down { margin-top: auto; transform: rotate(180deg); }
  .hscroll { height: 11px; display: flex; align-items: center; padding-right: 12px; background: #f0f0f0; }
  .hscroll i { width: 166px; height: 11px; background: #cdcdcd; }
  .back { transform: rotate(-90deg); }
  .fore { margin-left: auto; transform: rotate(90deg); }
  .map-bar { display: flex; align-items: center; height: 18px; padding-right: 1px; }
  .map-bar .mini { width: 16px; }
  .map-bar input { flex: 1; min-width: 0; height: 16px; margin: 0; appearance: none; background: linear-gradient(#dcdcdc, #e8e8e8) no-repeat center / 100% 3px; }
  .map-bar input::-webkit-slider-thumb { appearance: none; width: 7px; height: 15px; background: #0078d7; }
  .track { flex: 1; min-height: 0; width: 100%; background: #000; }

  .status { display: flex; align-items: center; gap: 4px; height: 19px; padding: 0 11px 0 2px; white-space: pre; }
  .swatch { width: 11px; height: 11px; border: 1px solid #333; }
  .swatch.r { margin-left: 5px; }
  .status em { font-style: normal; color: #9b1c22; }
  .sync { margin-left: auto; height: 15px; padding: 0 4px 0 2px; gap: 3px; background: #e3e3e3; border: 1px solid #bdbdbd; }

  .taskbar { display: flex; align-items: stretch; height: 29px; background: #03060b; color: #fff; }
  .start { width: 34px; justify-content: center; }
  .search { display: flex; align-items: center; gap: 7px; width: 248px; padding: 0 9px 0 8px; background: #f1f1f1; color: #333; }
  .search > i { width: 14px; height: 15px; border: 2px solid #111; border-radius: 50%; }
  .search input { flex: 1; min-width: 0; padding: 0; border: 0; background: none; font: 11px/14px Lato, "Open Sans", sans-serif; }
  .search input::placeholder { color: #555; }
  .task { width: 35px; justify-content: center; }
  .task .icon { width: 16px; height: 16px; }
  .run.task { height: auto; margin: 0; border: 0; background: linear-gradient(#76cfe2, #76cfe2) no-repeat center bottom / 28px 2px; }
  .task.run.active { background-color: #3b3d40; background-size: 100% 2px; }
  .tray { display: flex; align-items: center; gap: 12px; margin-left: auto; }
  .taskbar time { width: 64px; padding-top: 2px; text-align: center; line-height: 13px; }
  .notes { position: relative; width: 28px; border-right: 1px solid #555; margin-right: 2px; }
  .notes b { position: absolute; right: 8px; bottom: 4px; width: 11px; height: 11px; border: 1px solid #ccc; border-radius: 50%; background: #333; font: 8px/9px Lato, sans-serif; text-align: center; }
</style>
